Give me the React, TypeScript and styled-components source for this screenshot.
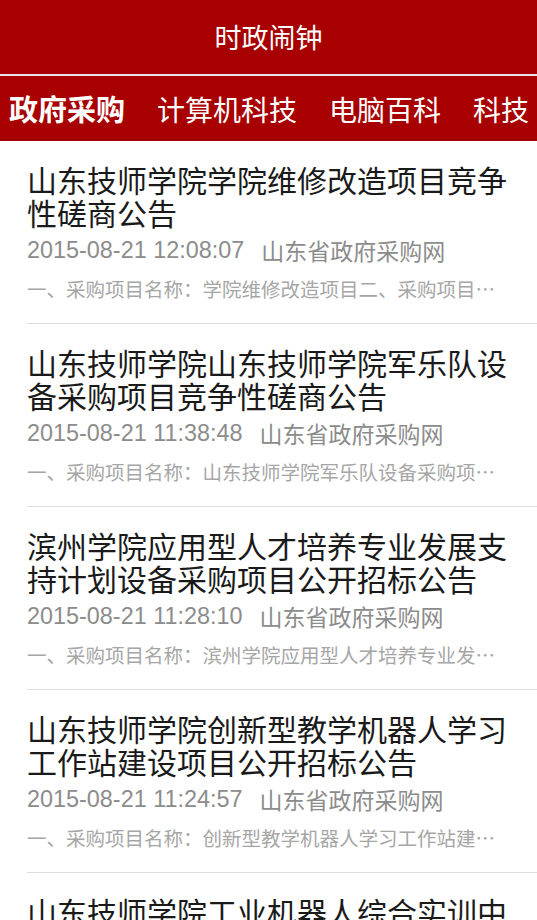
import styled, { createGlobalStyle } from 'styled-components';

const GlobalStyle = createGlobalStyle`
  html, body {
    margin: 0;
    padding: 0;
    background: #ffffff;
  }
  body {
    font-family: "Noto Sans CJK SC", "Noto Sans", sans-serif;
  }
`;

interface Article {
  title: string;
  time: string;
  source: string;
  summary: string;
}

const tabs = ['政府采购', '计算机科技', '电脑百科', '科技'];

const articles: Article[] = [
  {
    title: '山东技师学院学院维修改造项目竞争性磋商公告',
    time: '2015-08-21 12:08:07',
    source: '山东省政府采购网',
    summary: '一、采购项目名称：学院维修改造项目二、采购项目…',
  },
  {
    title: '山东技师学院山东技师学院军乐队设备采购项目竞争性磋商公告',
    time: '2015-08-21 11:38:48',
    source: '山东省政府采购网',
    summary: '一、采购项目名称：山东技师学院军乐队设备采购项…',
  },
  {
    title: '滨州学院应用型人才培养专业发展支持计划设备采购项目公开招标公告',
    time: '2015-08-21 11:28:10',
    source: '山东省政府采购网',
    summary: '一、采购项目名称：滨州学院应用型人才培养专业发…',
  },
  {
    title: '山东技师学院创新型教学机器人学习工作站建设项目公开招标公告',
    time: '2015-08-21 11:24:57',
    source: '山东省政府采购网',
    summary: '一、采购项目名称：创新型教学机器人学习工作站建…',
  },
  {
    title: '山东技师学院工业机器人综合实训中心建设项目公开招标公告',
    time: '2015-08-21 11:20:31',
    source: '山东省政府采购网',
    summary: '一、采购项目名称：工业机器人综合实训中心建设项…',
  },
];

const Page = styled.div`
  width: 537px;
  height: 920px;
  overflow: hidden;
  background: #ffffff;
`;

const Header = styled.header`
  height: 76px;
  box-sizing: border-box;
  padding-bottom: 2px;
  background: #a80000;
  color: #ffffff;
  display: flex;
  align-items: center;
  justify-content: center;
  font-size: 27px;
  border-bottom: 2px solid #e4e4e4;
`;

const TabBar = styled.nav`
  height: 65px;
  background: #a80000;
  display: flex;
  align-items: center;
  gap: 32px;
  padding-left: 9px;
  overflow: hidden;
  white-space: nowrap;
`;

const Tab = styled.span<{ $active?: boolean }>`
  flex: none;
  color: #ffffff;
  font-size: ${({ $active }) => ($active ? '29px' : '28px')};
  font-weight: ${({ $active }) => ($active ? 700 : 400)};
  line-height: 1;
`;

const List = styled.ul`
  list-style: none;
  margin: 0;
  padding: 0;
`;

const Item = styled.li`
  margin-left: 27px;
  padding: 22px 20px 20px 0;
  border-bottom: 1px solid #dedede;
`;

const Title = styled.h2`
  margin: 0;
  font-size: 30px;
  font-weight: 400;
  line-height: 33px;
  color: #1a1a1a;
`;

const Meta = styled.div`
  margin-top: 6px;
  display: flex;
  gap: 17px;
  font-size: 23px;
  line-height: 30px;
  color: #8c8c8c;
`;

const Time = styled.span`
  font-family: "Liberation Sans", Arial, sans-serif;
  font-size: 23.4px;
`;

const Summary = styled.p`
  margin: 10px 0 0;
  font-size: 19.5px;
  line-height: 28px;
  color: #a6a6a6;
  white-space: nowrap;
`;

export default function App() {
  return (
    <Page>
      <GlobalStyle />
      <Header>时政闹钟</Header>
      <TabBar>
        {tabs.map((tab, i) => (
          <Tab key={tab} $active={i === 0}>
            {tab}
          </Tab>
        ))}
      </TabBar>
      <List>
        {articles.map((a) => (
          <Item key={a.title}>
            <Title>{a.title}</Title>
            <Meta>
              <Time>{a.time}</Time>
              <span>{a.source}</span>
            </Meta>
            <Summary>{a.summary}</Summary>
          </Item>
        ))}
      </List>
    </Page>
  );
}
